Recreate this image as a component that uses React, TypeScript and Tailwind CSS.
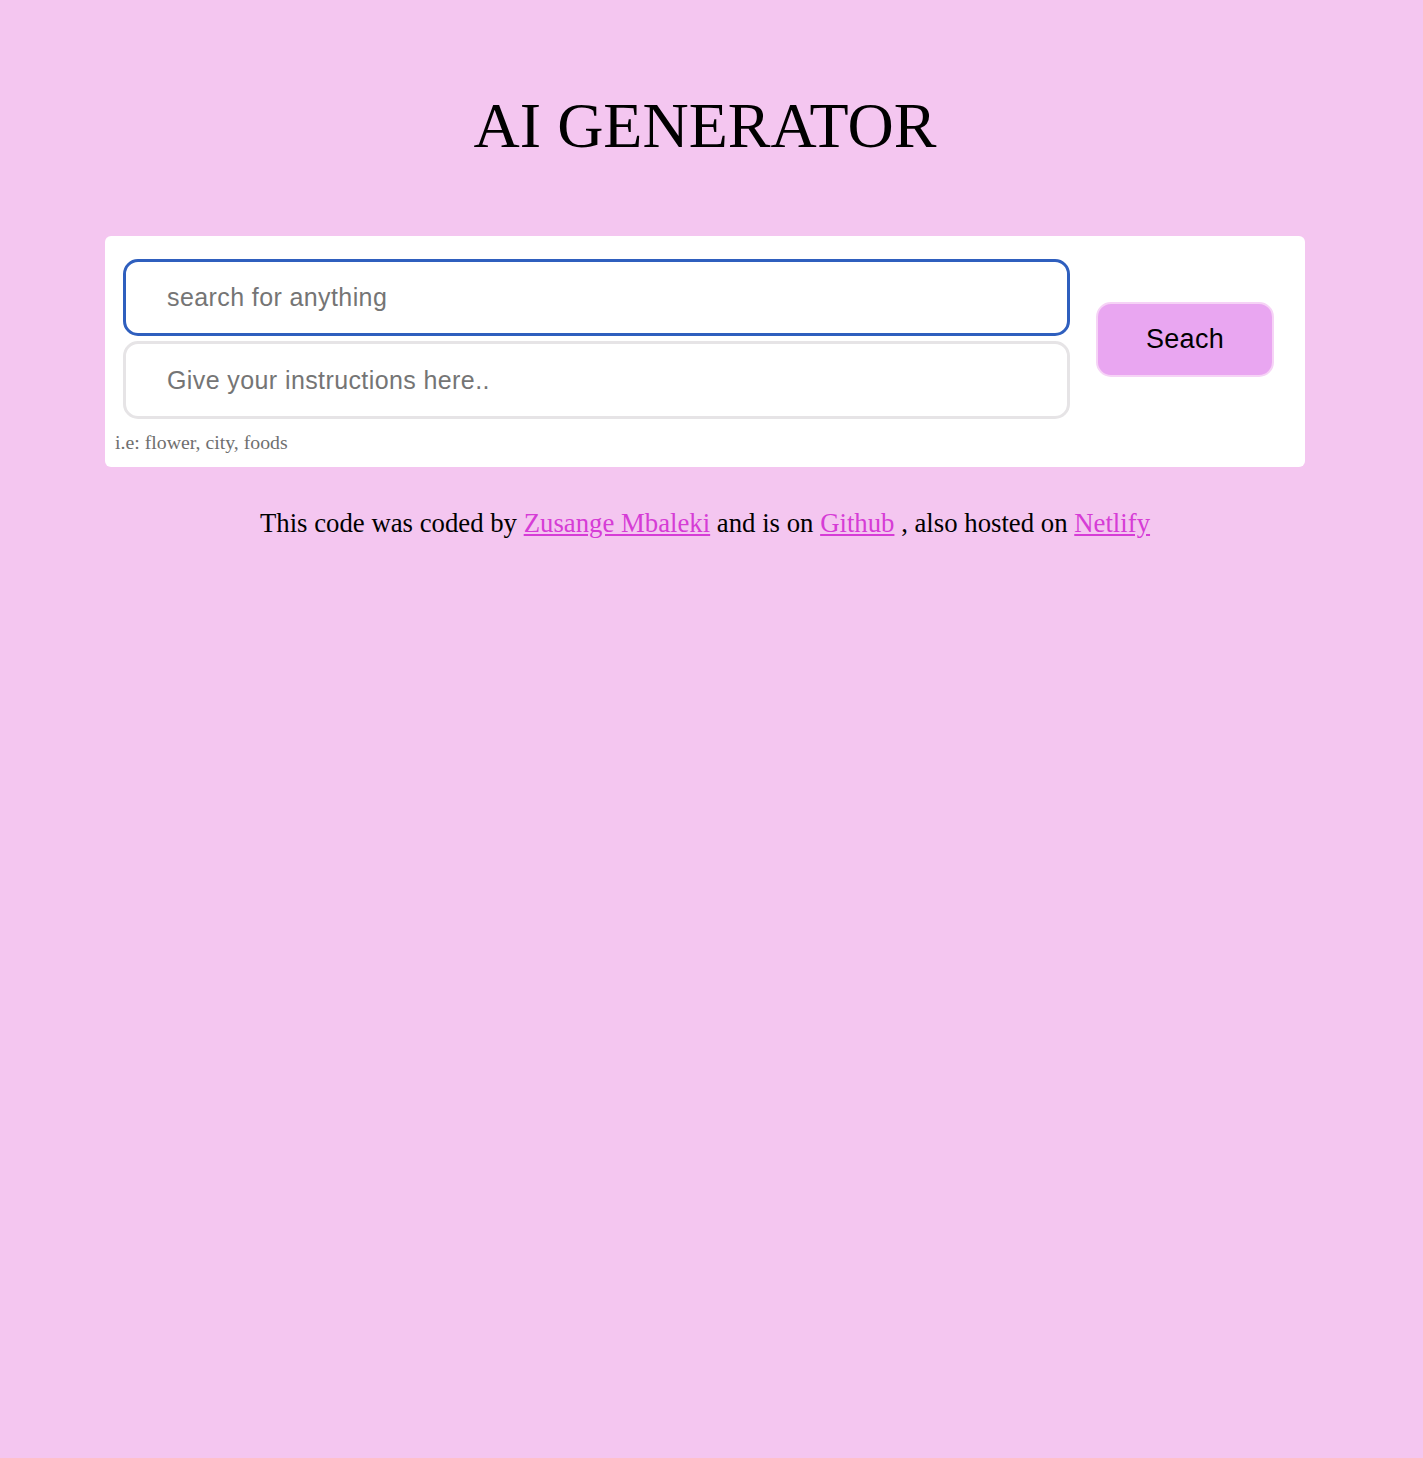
import { useState } from "react";

export default function App() {
  const [query, setQuery] = useState("");
  const [instructions, setInstructions] = useState("");

  return (
    <div className="min-h-[1458px] w-full bg-[#f4c6f0] text-black">
      <div className="w-[1410px] flex flex-col items-center pt-[94px]">
        <h1 className="text-[64px] leading-[64px] font-normal font-['Liberation_Serif',serif]">AI GENERATOR</h1>

        <form
          className="mt-[78px] w-[1200px] rounded-[6px] bg-white pt-[23px] pb-[14px] pl-[10px]"
          onSubmit={(e) => e.preventDefault()}
        >
          <div className="flex items-center">
            <div className="ml-[8px] flex w-[947px] flex-col gap-[5px]">
              <input
                className="h-[77px] w-full rounded-[15px] border-[3px] border-[#2f5fbe] bg-white pl-[41px] text-[25px] tracking-[0.4px] outline-none placeholder:text-[#757575] font-['Liberation_Sans',Arial,sans-serif]"
                placeholder="search for anything"
                value={query}
                onChange={(e) => setQuery(e.target.value)}
              />
              <input
                className="h-[78px] w-full rounded-[15px] border-[3px] border-[#e6e4e6] bg-white pl-[41px] text-[25px] tracking-[0.4px] outline-none placeholder:text-[#757575] font-['Liberation_Sans',Arial,sans-serif]"
                placeholder="Give your instructions here.."
                value={instructions}
                onChange={(e) => setInstructions(e.target.value)}
              />
            </div>
            <button
              type="submit"
              className="ml-[26px] h-[75px] w-[178px] rounded-[15px] border-2 border-[#f6d3f6] bg-[#e9a6f1] text-[27px] tracking-[0.3px] text-black font-['Liberation_Sans',Arial,sans-serif]"
            >
              Seach
            </button>
          </div>
          <p className="mt-[12px] text-[19.8px] leading-[22px] text-[#6f6f6f] font-['Liberation_Serif',serif]">
            i.e: flower, city, foods
          </p>
        </form>

        <p className="mt-[43px] text-[26.75px] leading-[27px] font-['Liberation_Serif',serif]">
          This code was coded by{" "}
          <a href="#" className="text-[#d63cd6] underline">
            Zusange Mbaleki
          </a>{" "}
          and is on{" "}
          <a href="#" className="text-[#d63cd6] underline">
            Github
          </a>{" "}
          , also hosted on{" "}
          <a href="#" className="text-[#d63cd6] underline">
            Netlify
          </a>
        </p>
      </div>
    </div>
  );
}
